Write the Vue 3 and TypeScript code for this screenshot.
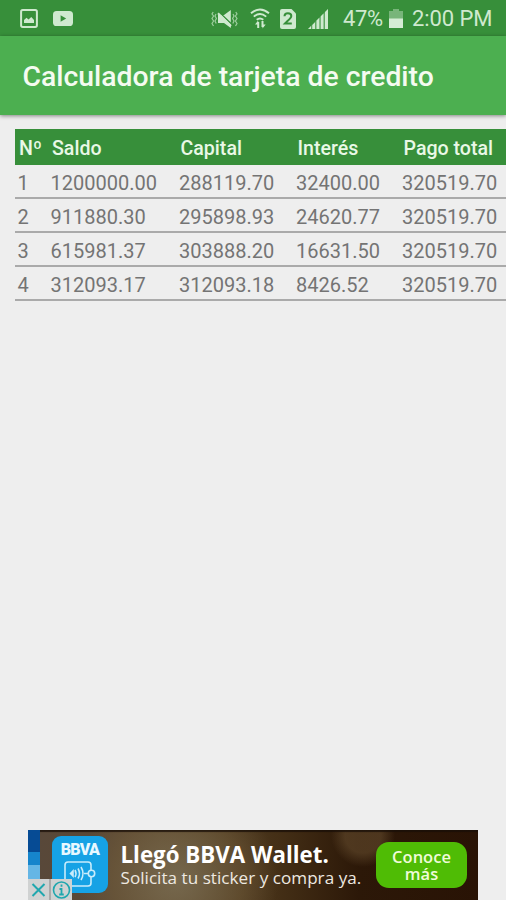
<script setup lang="ts">
interface Payment {
  n: number
  balance: string
  capital: string
  interest: string
  total: string
}

const payments: Payment[] = [
  { n: 1, balance: '1200000.00', capital: '288119.70', interest: '32400.00', total: '320519.70' },
  { n: 2, balance: '911880.30', capital: '295898.93', interest: '24620.77', total: '320519.70' },
  { n: 3, balance: '615981.37', capital: '303888.20', interest: '16631.50', total: '320519.70' },
  { n: 4, balance: '312093.17', capital: '312093.18', interest: '8426.52', total: '320519.70' },
]
</script>

<template>
  <div class="screen">
    <header class="status">
      <svg class="ic-image" width="18" height="19" viewBox="0 0 18 19">
        <rect x="1.1" y="1.1" width="15.8" height="16.8" rx="1.6" fill="none" stroke="#cfe9cf" stroke-width="2" />
        <path d="M4 14v-3l2.5-2.2 2 1.6L11.3 8 14 11v3z" fill="#cfe9cf" />
      </svg>
      <svg class="ic-video" width="20" height="15" viewBox="0 0 20 15">
        <rect width="20" height="15" rx="3.6" fill="#cfe9cf" />
        <path d="M7.6 4.2v6.6l5.6-3.3z" fill="#378f3a" />
      </svg>
      <span class="grow"></span>
      <svg class="ic-mute" width="27" height="20" viewBox="0 0 27 20">
        <g fill="none" stroke="#9fce9f" stroke-width="1.2">
          <path d="M2.2 3 1 5l1.6 2L1 9.500l1.600 2.500L1 14.500l1.500 2.500M5 5 4 7l1.400 2.500L4 12l1.200 2.500" />
          <path d="M24.800 3 26 5l-1.600 2L26 9.500 24.400 12l1.600 2.500-1.500 2.500M22 5l1 2-1.400 2.500L23 12l-1.200 2.500" />
        </g>
        <path d="M7 6h6L19.800 1v18L13 14H7z" fill="#cfe9cf" />
        <path d="m8.500 3.500 13 12.500" stroke="#378f3a" stroke-width="1.500" />
        <path d="m7 4.300 13 12.700" stroke="#cfe9cf" stroke-width="2" />
      </svg>
      <svg class="ic-wifi" width="20" height="21" viewBox="0 0 20 21">
        <g fill="none" stroke="#cfe9cf" stroke-width="1.9">
          <path d="M1 5.300Q10-2.500 19 5.300" />
          <path d="M3.800 8.600q6.200-5.400 12.400 0" />
          <path d="M6.700 11.700q3.300-2.600 6.600 0" />
          <path d="M8.200 20v-6M12.500 13v6" stroke-width="2" />
        </g>
        <path d="m5 16.500 3.200-4V16.500zM12.500 16.500h3.200l-3.200 4z" fill="#cfe9cf" />
      </svg>
      <svg class="ic-sim" width="16" height="20" viewBox="0 0 16 20">
        <path d="M2 0h9.500L16 4.500V18a2 2 0 0 1-2 2H2a2 2 0 0 1-2-2V2a2 2 0 0 1 2-2z" fill="#cfe9cf" />
        <path d="M4.500 7.200q0-3 3.400-3t3.400 2.700c0 2.300-3.200 4.400-6.300 7.600h6.800" fill="none" stroke="#378f3a" stroke-width="2" />
      </svg>
      <svg class="ic-signal" width="20" height="20" viewBox="0 0 20 20">
        <path d="M0 20 20 0v20z" fill="#5fa862" />
        <path d="M0 20l3-3v3zM4.300 16 7 13.300V20H4.300zM8.500 11.500l2.800-2.800V20H8.500zM12.800 7.200l2.700-2.700V20h-2.700zM17 3l3-3v20h-3z" fill="#cfe9cf" />
      </svg>
      <span class="percent">47%</span>
      <svg class="ic-battery" width="14" height="19" viewBox="0 0 14 19">
        <path d="M4 0h6v2h4v17H0V2h4z" fill="#78b57a" />
        <path d="M0 9.500h14V19H0z" fill="#d5ecd5" />
      </svg>
      <span class="clock">2:00 PM</span>
    </header>

    <div class="toolbar"><h1>Calculadora de tarjeta de credito</h1></div>

    <main>
      <div class="row head">
        <span>Nº</span><span>Saldo</span><span>Capital</span><span>Interés</span><span>Pago total</span>
      </div>
      <div v-for="p in payments" :key="p.n" class="row">
        <span>{{ p.n }}</span><span>{{ p.balance }}</span><span>{{ p.capital }}</span><span>{{ p.interest }}</span><span>{{ p.total }}</span>
      </div>
    </main>

    <aside class="ad">
      <div class="stripe"></div>
      <div class="logo">
        <b>BBVA</b>
        <svg width="32" height="26" viewBox="0 0 32 26" fill="none" stroke="#c9ecfb" stroke-width="1.600">
          <path d="M27 9V4q0-3-3-3H4Q1 1 1 4v18q0 3 3 3h20q3 0 3-3v-6" />
          <circle cx="27.500" cy="12.500" r="3.200" />
          <path d="M24 12.500h-4M17 6q4 6.500 0 13M14 7.500q3 5 0 10M11 9q2 3.500 0 7" />
          <path d="M6.500 12.500 9 10v5z" fill="#c9ecfb" />
        </svg>
      </div>
      <div class="copy">
        <strong>Llegó BBVA Wallet.</strong>
        <span>Solicita tu sticker y compra ya.</span>
      </div>
      <button class="cta">Conoce<br>más</button>
      <div class="choices">
        <svg width="21" height="21" viewBox="0 0 21 21"><path d="m4.500 5 12 12m0-12-12 12" stroke="#20a7ae" stroke-width="2" /></svg>
        <svg width="21" height="21" viewBox="0 0 21 21" fill="none" stroke="#20a7ae">
          <circle cx="10.500" cy="11" r="8" stroke-width="1.600" />
          <path d="M10.500 5.500v2.200M8.500 10h2v5.500m-2.300 0h4.600" stroke-width="1.800" />
        </svg>
      </div>
    </aside>
  </div>
</template>

<style>
body {
  margin: 0;
}
</style>

<style scoped>
.screen {
  width: 506px;
  height: 900px;
  display: flex;
  flex-direction: column;
  overflow: hidden;
  background: #eee;
  font-family: Roboto, sans-serif;
}
.status {
  height: 36px;
  flex: none;
  display: flex;
  align-items: center;
  box-sizing: border-box;
  padding: 1px 14px 0 20px;
  background: #378f3a;
  color: #cfe9cf;
  font-size: 22px;
  line-height: 36px;
  white-space: nowrap;
}
.status svg {
  flex: none;
}
.ic-video {
  margin-left: 15px;
}
.grow {
  flex: 1;
}
.ic-wifi {
  margin-left: 12px;
}
.ic-sim {
  margin-left: 10px;
}
.ic-signal {
  margin-left: 12px;
}
.percent {
  width: 41px;
  margin-left: 15px;
  letter-spacing: -0.4px;
}
.ic-battery {
  margin-left: 5px;
}
.clock {
  width: 80px;
  margin-left: 9px;
  letter-spacing: -0.1px;
}
.toolbar {
  position: relative;
  height: 79px;
  flex: none;
  display: flex;
  align-items: center;
  box-sizing: border-box;
  padding: 2px 0 0 22.5px;
  background: #4caf50;
  box-shadow: 0 1px 4px rgba(0, 0, 0, 0.45);
}
h1 {
  margin: 0;
  color: #f4fbf0;
  font-size: 28.35px;
  font-weight: 500;
  line-height: 36px;
  white-space: nowrap;
}
main {
  flex: 1;
  padding: 14px 0 0 15px;
}
.row {
  height: 34px;
  display: grid;
  grid-template-columns: 33px 128.500px 117px 106px 107px;
  box-sizing: border-box;
  padding: 1px 0 0 2.500px;
  border-bottom: 2px solid #aaa;
  color: #747474;
  font-size: 20px;
  line-height: 34px;
  white-space: nowrap;
}
.row.head {
  height: 36px;
  padding: 1px 0 0 4px;
  border: 0;
  background: #378f3a;
  color: #e9f8e6;
  font-size: 19.6px;
  font-weight: 500;
  letter-spacing: 0;
  line-height: 38px;
}
.ad {
  display: flex;
  position: relative;
  width: 450px;
  height: 70px;
  flex: none;
  margin-left: 28px;
  overflow: hidden;
  background:
    radial-gradient(circle at 150px 50px, rgba(128, 116, 88, 0.75) 0, rgba(118, 98, 62, 0.45) 65px, transparent 100px),
    radial-gradient(circle at 335px 5px, rgba(100, 75, 45, 0.6) 0 18px, transparent 32px),
    linear-gradient(90deg, #58483a 0, #5b4832 130px, #442f16 250px, #2c1808 330px, #291305 100%);
  box-shadow: inset 0 2px 1px rgba(25, 15, 8, 0.8);
}
.stripe {
  width: 12px;
  background: linear-gradient(#064b94 0 22px, #1685cc 22px 35px, #65b6e5 35px 50px, #91cbe9 50px);
}
.logo {
  display: flex;
  flex-direction: column;
  align-items: center;
  width: 56px;
  height: 57px;
  margin: 6px 0 0 12px;
  border-radius: 9px;
  background: #16a2e5;
  color: #e8f8ff;
}
.logo b {
  margin-top: 5px;
  font-size: 16px;
  line-height: 18px;
  font-weight: 900;
  letter-spacing: -0.7px;
}
.logo svg {
  margin-top: 2px;
}
.copy {
  display: flex;
  flex-direction: column;
  width: 250px;
  margin: 11px 0 0 12.5px;
  color: #fff;
  font-family: "Open Sans", sans-serif;
  white-space: nowrap;
}
.copy strong {
  font-size: 22.3px;
  line-height: 27px;
}
.copy span {
  color: #eee9e1;
  font-size: 17.1px;
  line-height: 19px;
  font-weight: 500;
  letter-spacing: 0.03px;
}
.cta {
  width: 91px;
  height: 46px;
  margin: 12px 0 0 5.5px;
  padding: 0;
  border: 0;
  border-radius: 13px;
  background: #4fbc05;
  color: #effbd9;
  font: 600 16.5px/17px "Open Sans", sans-serif;
}
.choices {
  position: absolute;
  left: 0;
  bottom: 0;
  display: flex;
  gap: 2px;
  background: #aaa;
}
.choices svg {
  background: #d0d2d2;
}
</style>
